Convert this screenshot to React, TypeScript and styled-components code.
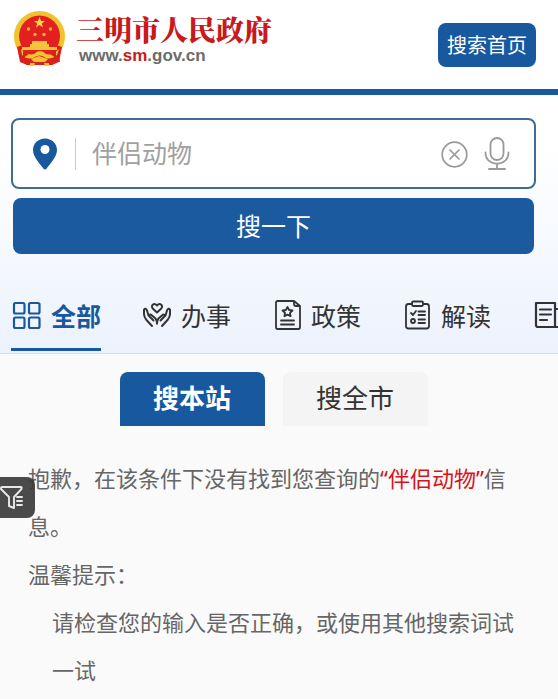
import React from "react";
import styled, { createGlobalStyle } from "styled-components";

const blue = "#18589f";

const GlobalStyle = createGlobalStyle`
  * { box-sizing: border-box; }
  body {
    margin: 0;
    background: #fafafa;
    color: #666;
    font-family: "Noto Sans", "Noto Sans CJK SC", sans-serif;
    overflow-x: hidden;
  }
  button, input { font: inherit; }
  button { border: 0; padding: 0; background: none; cursor: pointer; }
`;

const Page = styled.div`
  position: relative;
`;

const Header = styled.header`
  display: flex;
  align-items: center;
  justify-content: space-between;
  height: 95px;
  padding: 0 22px 0 13px;
  background: #fff;
  border-bottom: 6px solid ${blue};
`;

const Brand = styled.a`
  display: flex;
  align-items: center;
  gap: 10px;
  padding-bottom: 12px;
  text-decoration: none;
`;

const BrandText = styled.span`
  display: flex;
  flex-direction: column;
`;

const SiteName = styled.span`
  color: #c8191c;
  font-family: "Noto Serif CJK SC", "Noto Sans CJK SC", serif;
  font-size: 28px;
  font-weight: 900;
  line-height: 34px;
`;

const SiteUrl = styled.span`
  padding-left: 3px;
  color: #6b6b6b;
  font-family: "Liberation Sans", Arial, sans-serif;
  font-size: 17px;
  font-weight: 700;
  line-height: 20px;

  em {
    color: #c8191c;
    font-style: normal;
  }
`;

const HomeButton = styled.button`
  width: 98px;
  height: 44px;
  border-radius: 8px;
  background: ${blue};
  color: #fff;
  font-size: 20px;
`;

const SearchPanel = styled.section`
  padding: 23px 22px 0 11px;
  background: linear-gradient(#fff 20%, #ecf2fd);
  border-bottom: 1px solid #dedede;
  overflow: hidden;
`;

const SearchBox = styled.div`
  display: flex;
  align-items: center;
  height: 71px;
  padding: 0 24px 0 20px;
  border: 2px solid #3f6c93;
  border-radius: 8px;
  background: #fff;
`;

const Divider = styled.span`
  width: 1px;
  height: 32px;
  margin: 0 16px 0 18px;
  background: #ccc;
`;

const SearchInput = styled.input`
  flex: 1;
  min-width: 0;
  height: 48px;
  padding: 0 0 4px;
  border: 0;
  outline: 0;
  background: transparent;
  color: #a0a0a0;
  font-size: 25px;
`;

const IconButton = styled.button`
  display: flex;
  margin-left: 16px;
  color: #999;
`;

const SubmitButton = styled.button`
  display: block;
  width: calc(100% - 4px);
  height: 56px;
  margin: 9px 2px 0;
  padding-bottom: 2px;
  border-radius: 8px;
  background: #1b5a9f;
  color: #fff;
  font-size: 25px;
`;

const Tabs = styled.nav`
  display: flex;
  gap: 40px;
  margin-top: 27px;
  margin-right: -22px;
  overflow: hidden;
`;

const Tab = styled.button<{ $active?: boolean }>`
  display: flex;
  flex: none;
  align-items: center;
  gap: 10px;
  height: 70px;
  margin-bottom: 2px;
  border-bottom: 3px solid ${(p) => (p.$active ? blue : "transparent")};
  color: ${(p) => (p.$active ? blue : "#333")};
  font-size: 25px;
  font-weight: ${(p) => (p.$active ? 700 : 400)};
`;

const Scopes = styled.div`
  display: flex;
  justify-content: center;
  gap: 18px;
  padding: 18px 22px 0 11px;
`;

const Scope = styled.button<{ $active?: boolean }>`
  width: 145px;
  height: 54px;
  padding-bottom: 4px;
  border-radius: 8px 8px 0 0;
  background: ${(p) => (p.$active ? blue : "#f4f4f4")};
  color: ${(p) => (p.$active ? "#fff" : "#333")};
  font-size: 26px;
  font-weight: ${(p) => (p.$active ? 700 : 400)};
`;

const Results = styled.main`
  padding: 28px 36px 6px 28px;
  font-size: 22px;
  line-height: 48px;

  p { margin: 0; }
`;

const Keyword = styled.span`
  color: #d8141a;
`;

const Hint = styled.p`
  padding-left: 24px;
`;

const FilterButton = styled.button`
  position: absolute;
  top: 477px;
  left: 0;
  display: flex;
  align-items: center;
  width: 35px;
  height: 41px;
  border-radius: 0 8px 8px 0;
  background: rgba(60, 60, 60, 0.93);
  color: #e8e8e8;
`;

const Emblem = () => (
  <svg width="53" height="55" viewBox="0 0 53 55" aria-hidden="true">
    <path d="M9 35L7 51Q11 50 14 54Q18 51 22 54H31Q35 51 39 54Q42 50 47 51L44 35Z" fill="#d8201d" />
    <circle cx="26.500" cy="25.500" r="25.500" fill="#efc32e" />
    <path d="M4 36L12 33L26 41L41 33L49 36L46 51L39 54H14L7 51Z" fill="#d8201d" />
    <circle cx="26.500" cy="25" r="20.500" fill="#e3201f" />
    <path d="M26.500 6l1.500 4h4l-3.200 2.500 1.200 4-3.500-2.400-3.500 2.400 1.200-4L21 10h4z" fill="#f8d648" />
    <g fill="#f2b43a">
      <circle cx="15.500" cy="18" r="1.700" /><circle cx="37.500" cy="18" r="1.700" />
      <circle cx="22" cy="23.500" r="1.700" /><circle cx="31" cy="23.500" r="1.700" />
    </g>
    <path d="M19 30h15v3h2v4H17v-4h2zM9 36h35v3H9z" fill="#f3c33c" />
    <path d="M8 38Q15 45 21 43Q27 37 33 43Q39 45 46 38L44 44Q38 49 33 47Q27 42 20 47Q14 49 9 44Z" fill="#f0c331" />
    <path d="M18 48l8-3 9 3-3 3h-11zM17 52h5l-1 3h-4zM31 52h5v3h-4z" fill="#efc335" />
    <path d="M10 40l6 3-6 4zM43 40l-6 3 6 4z" fill="#d8201d" />
  </svg>
);

const PinIcon = () => (
  <svg width="24" height="32" viewBox="0 0 24 32" aria-hidden="true">
    <path d="M12 0.500C5.300 .5 0 5.500 0 12c0 7 6.500 13 10.500 18.800q1.500 1.600 3 0C17.500 25 24 19 24 12 24 5.500 18.700.5 12 .5z" fill={blue} />
    <circle cx="12" cy="11.500" r="4.500" fill="#fff" />
  </svg>
);

const line = { fill: "none", stroke: "currentColor", strokeLinecap: "round", strokeLinejoin: "round" } as const;

const ClearIcon = () => (
  <svg width="27" height="29" viewBox="0 -2 27 29" strokeWidth="1.700" {...line}>
    <circle cx="13.500" cy="13.500" r="12.300" />
    <path d="M9 9l9 9M18 9l-9 9" />
  </svg>
);

const MicIcon = () => (
  <svg width="26" height="34" viewBox="0 0 26 34" strokeWidth="1.800" {...line}>
    <rect x="6.500" y="1" width="13" height="22" rx="6.500" />
    <path d="M1.500 15.500C1.500 30.500 24.500 30.500 24.500 15.500M13 27v5M5 32h16" />
  </svg>
);

const GridIcon = () => (
  <svg width="30" height="30" viewBox="0 0 30 30" strokeWidth="2.200" {...line}>
    <rect x="3" y="3" width="10.500" height="10.500" rx="1.500" />
    <rect x="18" y="3" width="10.500" height="10.500" rx="1.500" />
    <rect x="3" y="17.500" width="10.500" height="10.500" rx="1.500" />
    <rect x="18" y="17.500" width="10.500" height="10.500" rx="1.500" />
  </svg>
);

const HandsIcon = () => (
  <svg width="30" height="30" viewBox="0 0 30 30" strokeWidth="2" {...line}>
    <path d="M16 12.500l-4-3.700C9 5.500 13 2.300 16 5.500c3-3.200 7 0 4 3.300z" />
    <path d="M11 26l-5.500-6q-2.500-3-2.500-6V9.500q1.500-2 3 1l1.500 5 5 5M8 15.500q1-2 3 0l3.500 3q1.500 1.500 1.500 5" />
    <path d="M21 26l5.500-6q2.500-3 2.500-6V9.500q-1.500-2-3 1l-1.500 5-5 5M24 15.500q-1-2-3 0l-3.500 3q-1.500 1.500-1.500 5" />
  </svg>
);

const PolicyIcon = () => (
  <svg width="30" height="30" viewBox="0 0 30 30" strokeWidth="1.800" {...line}>
    <path d="M23 1H6.500Q5 1 5 3v24q0 2 1.500 2h21q1.500 0 1.500-2V6zM23 1v3q0 2 2 2h4" />
    <path d="M16.500 7l1.600 3 3.400.5-2.500 2.400.6 3.300-3.100-1.600-3.100 1.600.6-3.300-2.500-2.400 3.400-.5zM10 20.500h13M10 24.500h13" />
  </svg>
);

const ChecklistIcon = () => (
  <svg width="30" height="30" viewBox="0 0 30 30" strokeWidth="1.800" {...line}>
    <path d="M11 4H7.500Q5 4 5 6.500v19.500Q5 28.500 7.500 28.500h18q2.500 0 2.500-2.500V6.500Q28 4 25.500 4H22" />
    <rect x="11" y="1.500" width="11" height="4.500" rx="1.200" />
    <path d="M10 13l2 2 3-4M17.500 11.500H24M17.500 15H24M17.500 19.500H24M17.500 23H24" />
    <circle cx="12" cy="21" r="2" />
  </svg>
);

const NewsIcon = () => (
  <svg width="30" height="30" viewBox="0 0 30 30" strokeWidth="2.200" {...line}>
    <path d="M24 27H7q-2 0-2-2V3h19zM24 9h5v16q0 2-3 2h-2M9 9.500h11M9 14.500h11M9 20h7" />
  </svg>
);

const FilterIcon = () => (
  <svg width="25" height="26" viewBox="0 0 25 26" strokeWidth="1.900" {...line}>
    <path d="M1 3Q1 2 2 2H21Q22 2 21.500 4L14 12v11l-5-2v-9L1 4z" />
    <path d="M17 12h5M17 16h5M17 20h5" />
  </svg>
);

export default function App() {
  return (
    <Page>
      <GlobalStyle />
      <Header>
        <Brand href="#">
          <Emblem />
          <BrandText>
            <SiteName>三明市人民政府</SiteName>
            <SiteUrl>www.<em>sm</em>.gov.cn</SiteUrl>
          </BrandText>
        </Brand>
        <HomeButton type="button">搜索首页</HomeButton>
      </Header>

      <SearchPanel>
        <form onSubmit={(e) => e.preventDefault()}>
          <SearchBox>
            <PinIcon />
            <Divider />
            <SearchInput type="text" aria-label="搜索" defaultValue="伴侣动物" />
            <IconButton type="button" aria-label="清除"><ClearIcon /></IconButton>
            <IconButton type="button" aria-label="语音"><MicIcon /></IconButton>
          </SearchBox>
          <SubmitButton type="submit">搜一下</SubmitButton>
        </form>
        <Tabs>
          <Tab type="button" $active><GridIcon />全部</Tab>
          <Tab type="button"><HandsIcon />办事</Tab>
          <Tab type="button"><PolicyIcon />政策</Tab>
          <Tab type="button"><ChecklistIcon />解读</Tab>
          <Tab type="button" aria-label="资讯"><NewsIcon /></Tab>
        </Tabs>
      </SearchPanel>

      <Scopes>
        <Scope type="button" $active>搜本站</Scope>
        <Scope type="button">搜全市</Scope>
      </Scopes>

      <Results>
        <p>抱歉，在该条件下没有找到您查询的<Keyword>“伴侣动物”</Keyword>信息。</p>
        <p>温馨提示：</p>
        <Hint>请检查您的输入是否正确，或使用其他搜索词试一试</Hint>
      </Results>

      <FilterButton type="button" aria-label="筛选"><FilterIcon /></FilterButton>
    </Page>
  );
}
